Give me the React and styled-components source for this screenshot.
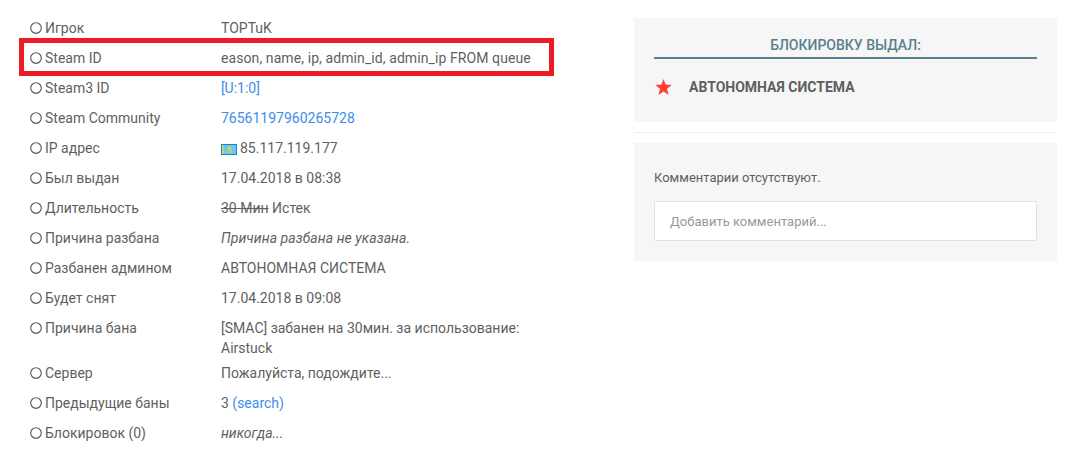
import styled, { createGlobalStyle } from "styled-components";

const Global = createGlobalStyle`
  html, body {
    margin: 0;
    padding: 0;
    background: #fff;
  }
  body {
    font-family: Roboto, "Noto Sans", sans-serif;
    font-size: 14px;
    line-height: 20px;
    color: #5f5f5f;
  }
`;

const Page = styled.div`
  position: relative;
  display: flex;
  width: 1072px;
  height: 456px;
  overflow: hidden;
  padding: 13px 15px 0 30px;
  box-sizing: border-box;
`;

const Details = styled.div`
  width: 604px;
  flex: none;
`;

const Row = styled.div`
  display: flex;
  padding: ${(p) => (p.$tight ? "5px 0 0" : "5px 0")};
`;

const Label = styled.div`
  display: flex;
  align-items: center;
  align-self: flex-start;
  width: 191px;
  flex: none;
  gap: 3px;
`;

const RingIcon = styled.svg`
  width: 12px;
  height: 12px;
  flex: none;
`;

const Value = styled.div`
  width: 320px;
  font-style: ${(p) => (p.$italic ? "italic" : "normal")};
  letter-spacing: ${(p) => p.$spacing || "normal"};
`;

const Link = styled.a`
  color: #3c8dea;
  text-decoration: none;
`;

const Struck = styled.span`
  text-decoration: line-through;
`;

const Flag = styled.svg`
  width: 16px;
  height: 11px;
  margin-right: 3px;
  vertical-align: -2px;
`;

const Highlight = styled.div`
  position: absolute;
  left: 19px;
  top: 38px;
  width: 535px;
  height: 38px;
  box-sizing: border-box;
  border: 5px solid #ed1c24;
`;

const Side = styled.div`
  width: 423px;
  flex: none;
  padding-top: 5px;
`;

const Panel = styled.div`
  background: #f6f6f6;
  padding: ${(p) => p.$pad};
`;

const PanelTitle = styled.div`
  text-align: center;
  color: #5a7f90;
  font-weight: 500;
  height: 22px;
  border-bottom: 2px solid #5a7f90;
  text-transform: uppercase;
`;

const Admin = styled.div`
  display: flex;
  align-items: center;
  margin-top: 18px;
  font-weight: 700;
`;

const AdminStar = styled.svg`
  width: 17px;
  height: 16px;
  margin: 0 17px 0 1px;
  flex: none;
`;

const Divider = styled.div`
  height: 1px;
  margin: 10px 0;
  background: #eeeeee;
`;

const Note = styled.div`
  font-size: 13px;
  margin-bottom: 13px;
`;

const CommentInput = styled.input`
  display: block;
  width: 100%;
  height: 40px;
  box-sizing: border-box;
  padding: 0 15px;
  background: #fff;
  border: 1px solid #e2e2e2;
  border-radius: 2px;
  font: 13px Roboto, sans-serif;
  color: #5f5f5f;
  &::placeholder {
    color: #999;
    opacity: 1;
  }
`;

const Ring = () => (
  <RingIcon viewBox="0 0 12 12">
    <circle cx="6" cy="6" r="5.3" fill="none" stroke="#5a5a5a" strokeWidth="1.15" />
  </RingIcon>
);

const KzFlag = () => (
  <Flag viewBox="0 0 16 11">
    <rect width="16" height="11" fill="#19a6dc" />
    <rect x="0.5" y="0.5" width="15" height="10" fill="#6fc7e8" stroke="#0a8fd6" />
    <rect x="1" y="1" width="1.5" height="9" fill="#e6d24a" />
    <circle cx="8.5" cy="4.6" r="2" fill="#e6d24a" />
    <path d="M5.5 7.5h6v1h-6z" fill="#e6d24a" />
  </Flag>
);

const rows = [
  { label: "Игрок", value: "TOPTuK" },
  { label: "Steam ID", value: "eason, name, ip, admin_id, admin_ip FROM queue", spacing: "0.09px" },
  { label: "Steam3 ID", value: <Link href="#">[U:1:0]</Link> },
  { label: "Steam Community", value: <Link href="#">76561197960265728</Link> },
  { label: "IP адрес", value: <><KzFlag />85.117.119.177</> },
  { label: "Был выдан", value: "17.04.2018 в 08:38" },
  { label: "Длительность", value: <><Struck>30 Мин</Struck> Истек</> },
  { label: "Причина разбана", value: "Причина разбана не указана.", italic: true, spacing: "0.07px" },
  { label: "Разбанен админом", value: "АВТОНОМНАЯ СИСТЕМА" },
  { label: "Будет снят", value: "17.04.2018 в 09:08" },
  { label: "Причина бана", value: "[SMAC] забанен на 30мин. за использование: Airstuck", tight: true },
  { label: "Сервер", value: "Пожалуйста, подождите..." },
  { label: "Предыдущие баны", value: <>3 <Link href="#">(search)</Link></> },
  { label: "Блокировок (0)", value: "никогда...", italic: true },
];

const App = () => (
  <Page>
    <Global />
    <Details>
      {rows.map((r) => (
        <Row key={r.label} $tight={r.tight}>
          <Label><Ring />{r.label}</Label>
          <Value $italic={r.italic} $spacing={r.spacing}>{r.value}</Value>
        </Row>
      ))}
    </Details>
    <Side>
      <Panel $pad="17px 20px 25px">
        <PanelTitle>Блокировку выдал:</PanelTitle>
        <Admin>
          <AdminStar viewBox="0 0 17 16">
            <polygon points="8.5,0 10.6,5.6 16.8,6 12,9.8 13.6,16 8.5,12.6 3.4,16 5,9.8 0.2,6 6.4,5.6" fill="#ff4136" />
          </AdminStar>
          АВТОНОМНАЯ СИСТЕМА
        </Admin>
      </Panel>
      <Divider />
      <Panel $pad="25px 20px 20px">
        <Note>Комментарии отсутствуют.</Note>
        <CommentInput placeholder="Добавить комментарий..." />
      </Panel>
    </Side>
    <Highlight />
  </Page>
);

export default App;
